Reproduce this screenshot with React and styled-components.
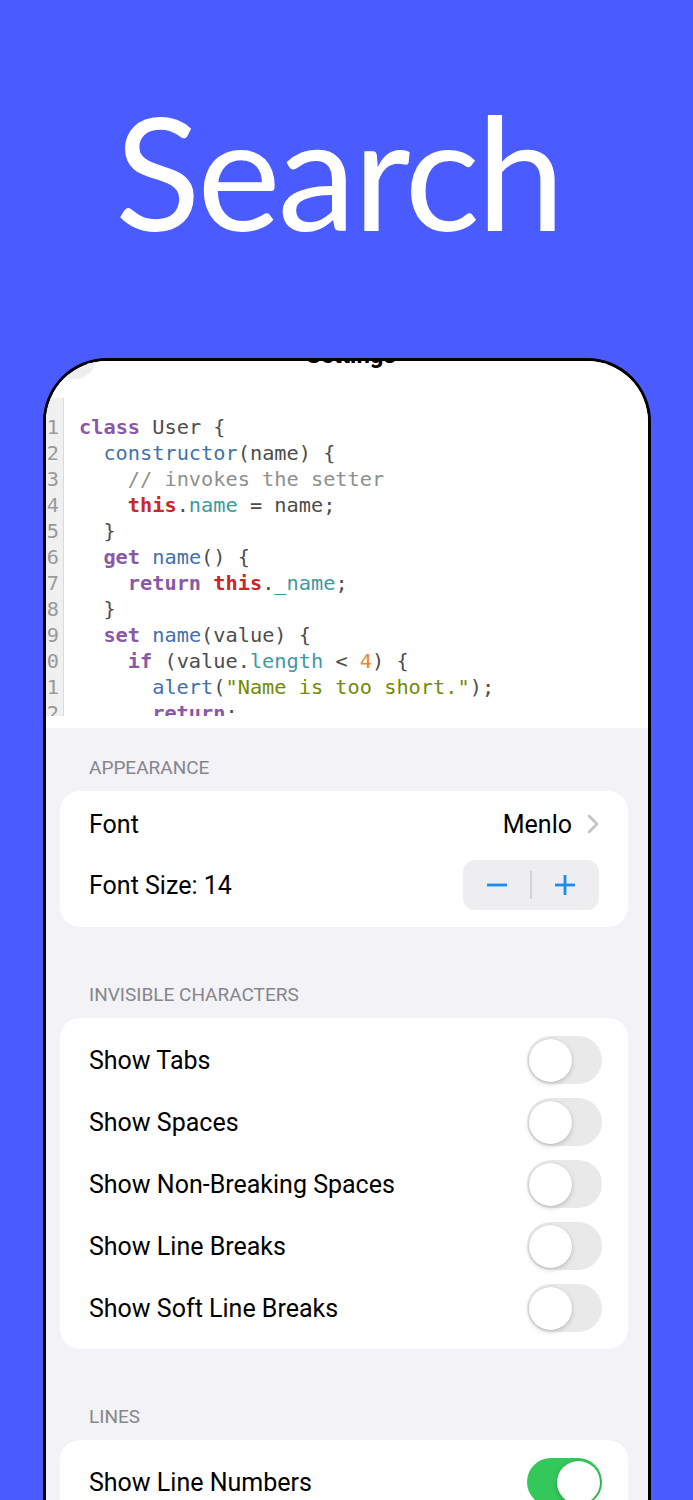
import React from 'react'
import styled, { createGlobalStyle } from 'styled-components'

const GlobalStyle = createGlobalStyle`
  html, body {
    margin: 0;
    padding: 0;
    background: #4a5bff;
    height: 1500px;
    overflow: hidden;
  }
  * {
    box-sizing: border-box;
  }
`

const Page = styled.div`
  width: 693px;
  height: 1500px;
  overflow: hidden;
  padding-top: 91px;
`

const Hero = styled.h1`
  margin: 0;
  height: 158px;
  font-family: Lato, 'Open Sans', sans-serif;
  font-weight: 400;
  font-size: 158px;
  line-height: 158px;
  letter-spacing: -3px;
  color: #fff;
  text-align: center;
  padding-right: 16px;
`

const Phone = styled.div`
  margin: 109px 42px 0 43px;
  height: 1200px;
  border: 3px solid #000;
  border-bottom: none;
  border-radius: 64px 64px 0 0;
  overflow: hidden;
  background: #f2f2f7;
`

const NavBar = styled.div`
  margin-top: -24px;
  height: 61px;
  background: #fff;
  display: grid;
  grid-template-columns: 1fr auto 1fr;
  align-items: start;
  padding-left: 8px;
`

const CloseButton = styled.div`
  width: 42px;
  height: 42px;
  border-radius: 50%;
  background: #eeeef0;
  justify-self: start;
`

const NavTitle = styled.div`
  margin-top: 3px;
  font-family: Roboto, 'Liberation Sans', sans-serif;
  font-weight: 700;
  font-size: 24px;
  line-height: 30px;
  color: #000;
`

const CodeView = styled.div`
  background: #fff;
  padding-bottom: 12px;
`

const CodeScroll = styled.div`
  height: 318px;
  overflow: hidden;
  display: flex;
  font-family: 'DejaVu Sans Mono', 'Liberation Mono', monospace;
  font-size: 20.3px;
  line-height: 26px;
`

const Gutter = styled.div`
  flex: none;
  width: 18px;
  background: #f0f0f0;
  border-right: 1px solid #dadada;
  padding: 16px 4px 0 0;
  color: #9a9a9a;
`

const LineNumber = styled.div`
  display: flex;
  justify-content: flex-end;
  white-space: pre;
`

const Code = styled.div`
  padding: 16px 0 0 15px;
  color: #4d4d4c;
  white-space: pre;
`

const Line = styled.div`
  padding-left: ${p => p.indent * 24.4}px;
`

const colors = {
  kw: '#8959a8',
  fn: '#4271ae',
  prop: '#3e999f',
  self: '#c82829',
  num: '#f5871f',
  str: '#718c00',
  com: '#8e908c',
}

const Tok = styled.span`
  color: ${p => colors[p.kind] || '#4d4d4c'};
  font-weight: ${p => (p.kind === 'kw' || p.kind === 'self' ? 700 : 400)};
`

const codeLines = [
  [0, [['kw', 'class'], ['', ' User {']]],
  [1, [['fn', 'constructor'], ['', '(name) {']]],
  [2, [['com', '// invokes the setter']]],
  [2, [['self', 'this'], ['', '.'], ['prop', 'name'], ['', ' = name;']]],
  [1, [['', '}']]],
  [1, [['kw', 'get'], ['', ' '], ['fn', 'name'], ['', '() {']]],
  [2, [['kw', 'return'], ['', ' '], ['self', 'this'], ['', '.'], ['prop', '_name'], ['', ';']]],
  [1, [['', '}']]],
  [1, [['kw', 'set'], ['', ' '], ['fn', 'name'], ['', '(value) {']]],
  [2, [['kw', 'if'], ['', ' (value.'], ['prop', 'length'], ['', ' < '], ['num', '4'], ['', ') {']]],
  [3, [['fn', 'alert'], ['', '('], ['str', '"Name is too short."'], ['', ');']]],
  [3, [['kw', 'return'], ['', ';']]],
]

const Settings = styled.div`
  padding: 0 20px 0 14px;
  font-family: Roboto, 'Liberation Sans', sans-serif;
`

const SectionHeader = styled.div`
  padding: ${p => (p.first ? 29 : 57)}px 29px 12px;
  font-size: 19px;
  line-height: 22px;
  color: #86868b;
  text-transform: uppercase;
`

const Card = styled.div`
  background: #fff;
  border-radius: 20px;
  padding: ${p => p.pad};
`

const Row = styled.div`
  height: ${p => p.h || 62}px;
  display: flex;
  align-items: center;
  justify-content: space-between;
  padding: 0 26px 0 29px;
  font-size: 25px;
  color: #000;
`

const Value = styled.div`
  display: flex;
  align-items: center;
  gap: 15px;
  padding-right: 3px;
`

const Stepper = styled.div`
  width: 136px;
  height: 50px;
  border-radius: 12px;
  background: #eeeef0;
  display: flex;
  align-items: center;
  margin-right: 3px;
`

const StepButton = styled.div`
  flex: 1;
  display: flex;
  align-items: center;
  justify-content: center;
`

const StepDivider = styled.div`
  width: 1.5px;
  height: 28px;
  background: #d3d3d6;
`

const Track = styled.div`
  width: 75px;
  height: 48px;
  border-radius: 24px;
  background: ${p => (p.on ? '#34c759' : '#e9e9ea')};
  display: flex;
  align-items: center;
  justify-content: ${p => (p.on ? 'flex-end' : 'flex-start')};
  padding: 0 2px;
`

const Knob = styled.div`
  width: 43px;
  height: 43px;
  border-radius: 50%;
  background: #fff;
  box-shadow: 0 2px 5px rgba(0, 0, 0, 0.18), 0 0 0 0.5px rgba(0, 0, 0, 0.06);
`

const Toggle = ({ on }) => (
  <Track on={on ? 1 : 0}>
    <Knob />
  </Track>
)

const Chevron = () => (
  <svg width="12" height="20" viewBox="0 0 12 20">
    <polyline points="2,2 10,10 2,18" fill="none" stroke="#c4c4c7" strokeWidth="2.6" strokeLinecap="round" strokeLinejoin="round" />
  </svg>
)

const Minus = () => (
  <svg width="22" height="22" viewBox="0 0 22 22">
    <line x1="1" y1="11" x2="21" y2="11" stroke="#1a8cf0" strokeWidth="2.8" />
  </svg>
)

const Plus = () => (
  <svg width="22" height="22" viewBox="0 0 22 22">
    <line x1="1" y1="11" x2="21" y2="11" stroke="#1a8cf0" strokeWidth="2.8" />
    <line x1="11" y1="1" x2="11" y2="21" stroke="#1a8cf0" strokeWidth="2.8" />
  </svg>
)

const invisibles = [
  'Show Tabs',
  'Show Spaces',
  'Show Non-Breaking Spaces',
  'Show Line Breaks',
  'Show Soft Line Breaks',
]

export default function App() {
  return (
    <Page>
      <GlobalStyle />
      <Hero>Search</Hero>
      <Phone>
        <NavBar>
          <CloseButton />
          <NavTitle>Settings</NavTitle>
          <div />
        </NavBar>
        <CodeView>
          <CodeScroll>
            <Gutter>
              {codeLines.map((_, i) => (
                <LineNumber key={i}>{i + 1}</LineNumber>
              ))}
            </Gutter>
            <Code>
              {codeLines.map(([indent, toks], i) => (
                <Line key={i} indent={indent}>
                  {toks.map(([kind, text], j) => (
                    <Tok key={j} kind={kind}>{text}</Tok>
                  ))}
                </Line>
              ))}
            </Code>
          </CodeScroll>
        </CodeView>
        <Settings>
          <SectionHeader first>Appearance</SectionHeader>
          <Card pad="2px 0 12px">
            <Row h={62}>
              <span>Font</span>
              <Value>
                <span>Menlo</span>
                <Chevron />
              </Value>
            </Row>
            <Row h={60}>
              <span>Font Size: 14</span>
              <Stepper>
                <StepButton><Minus /></StepButton>
                <StepDivider />
                <StepButton><Plus /></StepButton>
              </Stepper>
            </Row>
          </Card>
          <SectionHeader>Invisible Characters</SectionHeader>
          <Card pad="11px 0 10px">
            {invisibles.map(label => (
              <Row key={label}>
                <span>{label}</span>
                <Toggle />
              </Row>
            ))}
          </Card>
          <SectionHeader>Lines</SectionHeader>
          <Card pad="11px 0 10px">
            <Row>
              <span>Show Line Numbers</span>
              <Toggle on />
            </Row>
          </Card>
        </Settings>
      </Phone>
    </Page>
  )
}
